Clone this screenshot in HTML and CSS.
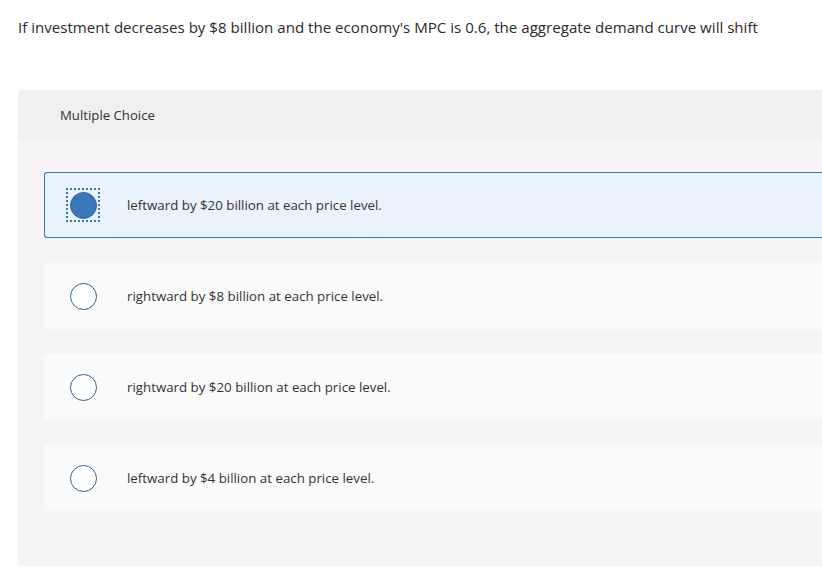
FILE: index.html
```html
<!DOCTYPE html>
<html>
<head>
<meta charset="utf-8">
<link rel="stylesheet" href="styles.css">
</head>
<body>
<p class="question">If investment decreases by $8 billion and the economy's MPC is 0.6, the aggregate demand curve will shift</p>
<div class="panel">
  <div class="panel-header">Multiple Choice</div>
  <div class="options">
    <div class="option selected">
      <span class="focus"><span class="radio"></span></span>
      <span class="label">leftward by $20 billion at each price level.</span>
    </div>
    <div class="option">
      <span class="focus"><span class="radio"></span></span>
      <span class="label">rightward by $8 billion at each price level.</span>
    </div>
    <div class="option">
      <span class="focus"><span class="radio"></span></span>
      <span class="label">rightward by $20 billion at each price level.</span>
    </div>
    <div class="option">
      <span class="focus"><span class="radio"></span></span>
      <span class="label">leftward by $4 billion at each price level.</span>
    </div>
  </div>
</div>
</body>
</html>
```

FILE: styles.css
```css
html, body {
  margin: 0;
  padding: 0;
  background: #ffffff;
  overflow: hidden;
}
body {
  font-family: "Open Sans", "Lato", sans-serif;
  color: #333333;
}
.question {
  margin: 0;
  padding: 17px 0 0 18px;
  height: 73px;
  font-size: 15.1px;
  line-height: 20px;
  color: #2b2b2b;
}
.panel {
  margin-left: 18px;
  width: 820px;
  background: #f5f5f5;
  border-radius: 3px 0 0 3px;
  padding-bottom: 55px;
}
.panel-header {
  height: 50px;
  background: #f0f0f0;
  display: flex;
  align-items: center;
  padding-left: 42px;
  font-size: 13.2px;
  color: #333;
  border-radius: 3px 0 0 0;
}
.options {
  padding: 32px 0 0 26px;
  display: flex;
  flex-direction: column;
  gap: 25px;
}
.option {
  height: 66px;
  box-sizing: border-box;
  background: #fafafa;
  border-radius: 3px 0 0 3px;
  display: flex;
  align-items: center;
  padding-left: 22px;
  font-size: 13.3px;
  color: #333;
}
.option.selected {
  background: #eaf2fb;
  border: 1px solid #3a76b9;
  border-right: none;
  padding-left: 21px;
}
.focus {
  width: 34px;
  height: 34px;
  box-sizing: border-box;
  display: flex;
  align-items: center;
  justify-content: center;
  border: 2px solid transparent;
}
.selected .focus {
  border: 2px dotted #3a76b9;
}
.radio {
  width: 27px;
  height: 27px;
  box-sizing: border-box;
  border-radius: 50%;
  border: 1.5px solid #2c5f91;
  background: #ffffff;
}
.selected .radio {
  background: #3a76b9;
  border-color: #2f639d;
}
.label {
  margin-left: 27px;
}
```
